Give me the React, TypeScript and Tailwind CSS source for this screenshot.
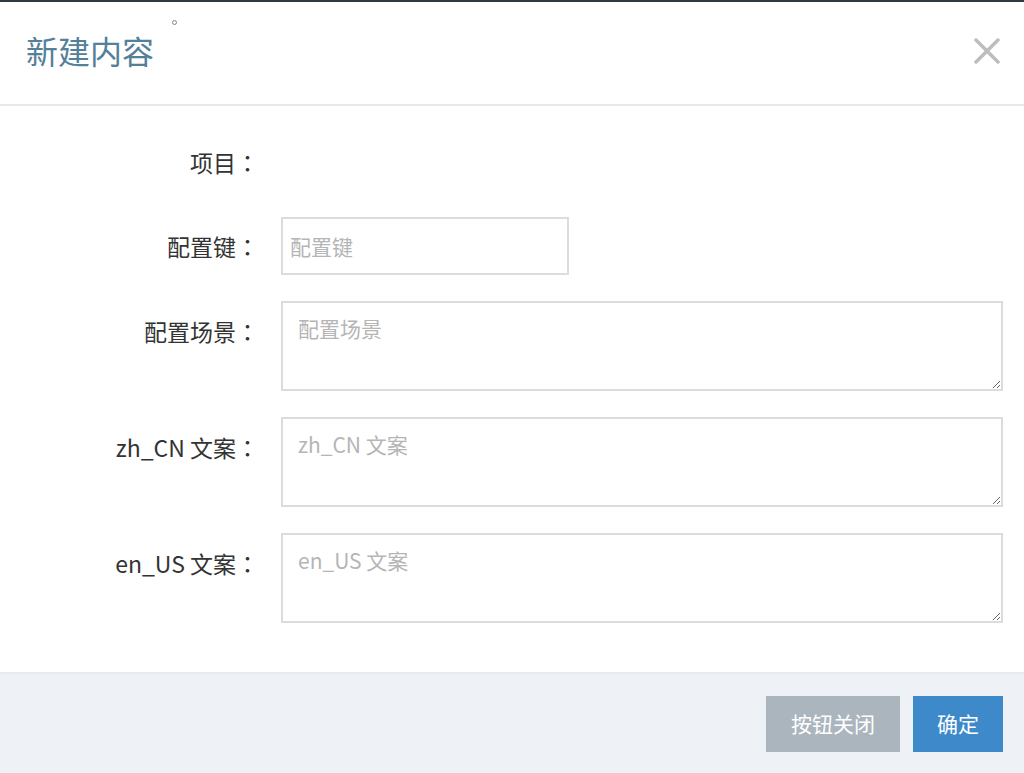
import React from "react";

const font = { fontFamily: '"Noto Sans CJK SC", "Noto Sans", sans-serif' };
const tc = { fontFamily: '"Noto Sans CJK TC", "Noto Sans CJK SC", sans-serif' };

function Label({ text }: { text: string }) {
  return (
    <div className="w-[259px] shrink-0 text-right text-[23px] text-[#333333]" style={font}>
      {text}
      <span style={tc}>：</span>
    </div>
  );
}

function Area({ placeholder }: { placeholder: string }) {
  return (
    <textarea
      placeholder={placeholder}
      className="w-[722px] h-[90px] border-2 border-[#dcdcdc] bg-white px-[15px] pt-[10px] text-[21px] text-[#333] placeholder:text-[#b5b5b5] outline-none"
      style={font}
    />
  );
}

export default function App() {
  return (
    <div className="w-[1024px] h-[773px] bg-white flex flex-col overflow-hidden" style={font}>
      <div className="h-[2px] bg-[#2f3a40]" />
      <div className="relative h-[104px] border-b-2 border-[#e8e8e8] flex items-center justify-between pl-[26px] pr-[24px]">
        <div className="text-[32px] text-[#55809a] -mt-[6px]">新建内容</div>
        <span className="absolute left-[172px] top-[18px] w-[5px] h-[5px] rounded-full border border-[#888]" />
        <svg width="26" height="26" viewBox="0 0 26 26" className="-mt-[4px]">
          <path d="M2 2 L24 24 M24 2 L2 24" stroke="#bdbdbd" strokeWidth="3.5" strokeLinecap="round" />
        </svg>
      </div>
      <div className="flex-1 flex flex-col gap-[26px] pt-[27px]">
        <div className="flex items-center h-[58px] gap-[22px]">
          <Label text="项目" />
        </div>
        <div className="flex items-center gap-[22px]">
          <Label text="配置键" />
          <input
            placeholder="配置键"
            className="w-[288px] h-[58px] border-2 border-[#dcdcdc] px-[7px] text-[21px] placeholder:text-[#b5b5b5] outline-none"
            style={font}
          />
        </div>
        <div className="flex items-start gap-[22px]">
          <div className="pt-[13px]"><Label text="配置场景" /></div>
          <Area placeholder="配置场景" />
        </div>
        <div className="flex items-start gap-[22px]">
          <div className="pt-[13px]"><Label text="zh_CN 文案" /></div>
          <Area placeholder="zh_CN 文案" />
        </div>
        <div className="flex items-start gap-[22px]">
          <div className="pt-[13px]"><Label text="en_US 文案" /></div>
          <Area placeholder="en_US 文案" />
        </div>
      </div>
      <div className="h-[101px] bg-[#eef1f5] border-t-2 border-[#e6eaed] flex items-start justify-end gap-[13px] pt-[22px] pr-[21px]">
        <button className="w-[134px] h-[56px] bg-[#abb5bd] text-white text-[21px]" style={font}>按钮关闭</button>
        <button className="w-[90px] h-[56px] bg-[#3e89c9] text-white text-[21px]" style={font}>确定</button>
      </div>
    </div>
  );
}
